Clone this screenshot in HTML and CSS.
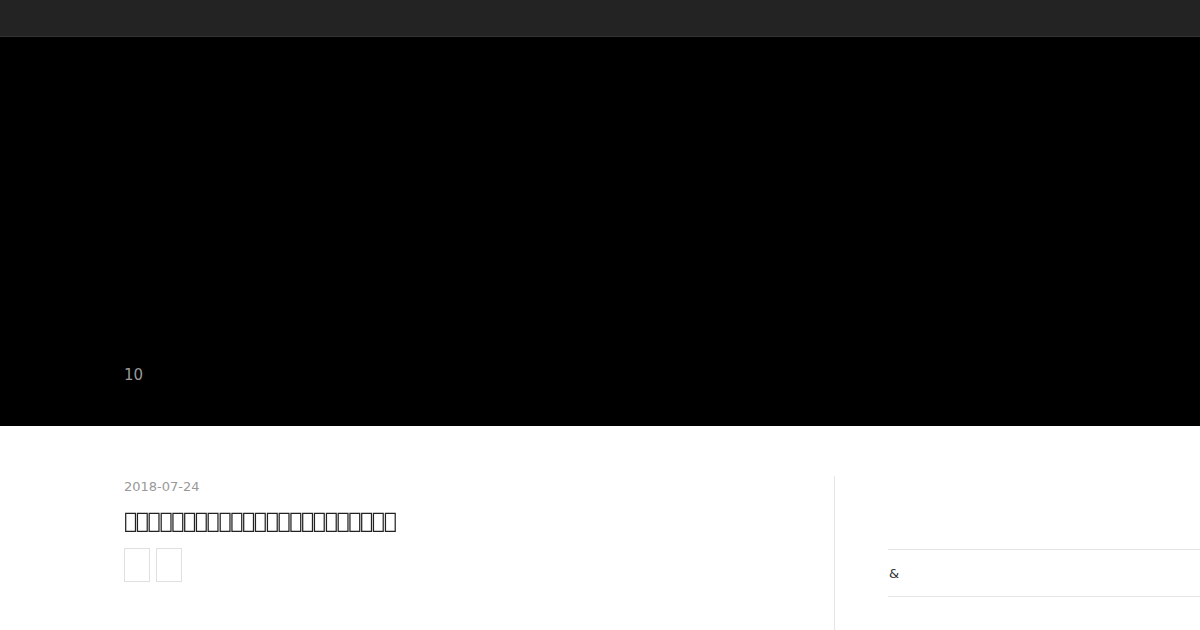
FILE: index.html
```html
<!DOCTYPE html>
<html>
<head>
    <meta charset="utf-8">
    <link rel="stylesheet" href="styles.css">
</head>
<body>

<!-- Top navigation -->
<header class="topbar"></header>

<!-- Hero -->
<section class="hero">
    <div class="hero-inner">
        <span class="hero-count">10</span>
    </div>
</section>

<div class="page">
    <main class="article">
        <div class="article-date">2018-07-24</div>
        <h1 class="article-title">&#xE000;&#xE000;&#xE000;&#xE000;&#xE000;&#xE000;&#xE000;&#xE000;&#xE000;&#xE000;&#xE000;&#xE000;&#xE000;&#xE000;&#xE000;&#xE000;&#xE000;&#xE000;&#xE000;&#xE000;&#xE000;&#xE000;&#xE000;</h1>
        <div class="article-tags">
            <a class="tag" href="#"></a>
            <a class="tag" href="#"></a>
        </div>
    </main>

    <aside class="sidebar">
        <ul class="side-list">
            <li>&amp;</li>
        </ul>
    </aside>
</div>

</body>
</html>
```

FILE: styles.css
```css
html, body {
    margin: 0;
    padding: 0;
}

body {
    font-family: 'DejaVu Sans', sans-serif;
    background-color: #fff;
    color: #333;
    overflow: hidden;
}

.topbar {
    height: 36px;
    background-color: #232323;
    border-bottom: 1px solid #333;
}

.hero {
    height: 389px;
    background-color: #000;
    display: flex;
    align-items: flex-end;
}

.hero-inner {
    padding: 0 0 42px 124px;
}

.hero-count {
    color: #999;
    font-size: 15px;
}

.page {
    display: grid;
    grid-template-columns: 835px 365px;
    margin-top: 50px;
}

.article {
    padding: 3px 0 0 124px;
    border-right: 1px solid #e5e5e5;
    min-height: 154px;
}

.article-date {
    color: #999;
    font-size: 13px;
    line-height: 16px;
}

.article-title {
    margin: 11px 0 0;
    font-size: 22px;
    letter-spacing: -1.4px;
    font-weight: normal;
    color: #222;
    line-height: 30px;
    will-change: transform;
}

.article-tags {
    display: flex;
    gap: 6px;
    margin-top: 12px;
}

.tag {
    display: block;
    width: 24px;
    height: 32px;
    border: 1px solid #e0e0e0;
}

.sidebar {
    padding: 73px 0 0 53px;
}

.side-list {
    list-style: none;
    margin: 0;
    padding: 0;
    border-top: 1px solid #e5e5e5;
}

.side-list li {
    border-bottom: 1px solid #e5e5e5;
    padding: 15px 0 14px 1px;
    font-size: 13px;
    line-height: 17px;
    color: #333;
}
```
